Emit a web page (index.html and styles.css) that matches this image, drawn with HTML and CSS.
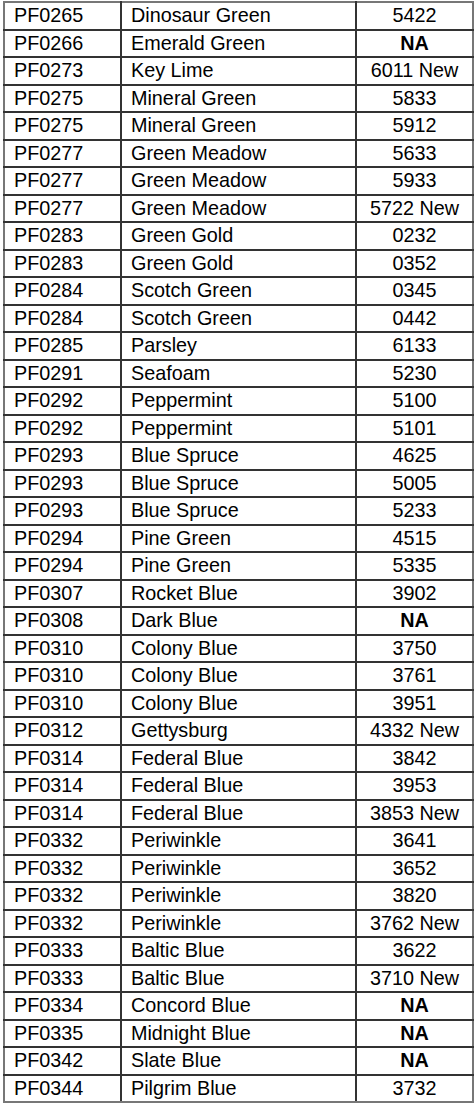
FILE: index.html
```html
<!DOCTYPE html>
<html>
<head>
<meta charset="utf-8">
<link rel="stylesheet" href="styles.css">
</head>
<body>
<table class="paint">
<colgroup><col class="c-code"><col class="c-name"><col class="c-num"></colgroup>
<tbody>
<tr><td>PF0265</td><td>Dinosaur Green</td><td class="num">5422</td></tr>
<tr><td>PF0266</td><td>Emerald Green</td><td class="num na">NA</td></tr>
<tr><td>PF0273</td><td>Key Lime</td><td class="num">6011 New</td></tr>
<tr><td>PF0275</td><td>Mineral Green</td><td class="num">5833</td></tr>
<tr><td>PF0275</td><td>Mineral Green</td><td class="num">5912</td></tr>
<tr><td>PF0277</td><td>Green Meadow</td><td class="num">5633</td></tr>
<tr><td>PF0277</td><td>Green Meadow</td><td class="num">5933</td></tr>
<tr><td>PF0277</td><td>Green Meadow</td><td class="num">5722 New</td></tr>
<tr><td>PF0283</td><td>Green Gold</td><td class="num">0232</td></tr>
<tr><td>PF0283</td><td>Green Gold</td><td class="num">0352</td></tr>
<tr><td>PF0284</td><td>Scotch Green</td><td class="num">0345</td></tr>
<tr><td>PF0284</td><td>Scotch Green</td><td class="num">0442</td></tr>
<tr><td>PF0285</td><td>Parsley</td><td class="num">6133</td></tr>
<tr><td>PF0291</td><td>Seafoam</td><td class="num">5230</td></tr>
<tr><td>PF0292</td><td>Peppermint</td><td class="num">5100</td></tr>
<tr><td>PF0292</td><td>Peppermint</td><td class="num">5101</td></tr>
<tr><td>PF0293</td><td>Blue Spruce</td><td class="num">4625</td></tr>
<tr><td>PF0293</td><td>Blue Spruce</td><td class="num">5005</td></tr>
<tr><td>PF0293</td><td>Blue Spruce</td><td class="num">5233</td></tr>
<tr><td>PF0294</td><td>Pine Green</td><td class="num">4515</td></tr>
<tr><td>PF0294</td><td>Pine Green</td><td class="num">5335</td></tr>
<tr><td>PF0307</td><td>Rocket Blue</td><td class="num">3902</td></tr>
<tr><td>PF0308</td><td>Dark Blue</td><td class="num na">NA</td></tr>
<tr><td>PF0310</td><td>Colony Blue</td><td class="num">3750</td></tr>
<tr><td>PF0310</td><td>Colony Blue</td><td class="num">3761</td></tr>
<tr><td>PF0310</td><td>Colony Blue</td><td class="num">3951</td></tr>
<tr><td>PF0312</td><td>Gettysburg</td><td class="num">4332 New</td></tr>
<tr><td>PF0314</td><td>Federal Blue</td><td class="num">3842</td></tr>
<tr><td>PF0314</td><td>Federal Blue</td><td class="num">3953</td></tr>
<tr><td>PF0314</td><td>Federal Blue</td><td class="num">3853 New</td></tr>
<tr><td>PF0332</td><td>Periwinkle</td><td class="num">3641</td></tr>
<tr><td>PF0332</td><td>Periwinkle</td><td class="num">3652</td></tr>
<tr><td>PF0332</td><td>Periwinkle</td><td class="num">3820</td></tr>
<tr><td>PF0332</td><td>Periwinkle</td><td class="num">3762 New</td></tr>
<tr><td>PF0333</td><td>Baltic Blue</td><td class="num">3622</td></tr>
<tr><td>PF0333</td><td>Baltic Blue</td><td class="num">3710 New</td></tr>
<tr><td>PF0334</td><td>Concord Blue</td><td class="num na">NA</td></tr>
<tr><td>PF0335</td><td>Midnight Blue</td><td class="num na">NA</td></tr>
<tr><td>PF0342</td><td>Slate Blue</td><td class="num na">NA</td></tr>
<tr><td>PF0344</td><td>Pilgrim Blue</td><td class="num">3732</td></tr>
</tbody>
</table>
</body>
</html>
```
FILE: styles.css
```css
html, body {
  margin: 0;
  padding: 0;
  background: #ffffff;
}
body {
  padding: 1px 0 0 3px;
  font-family: "Liberation Sans", Arial, sans-serif;
  color: #000;
}
.paint {
  border-collapse: collapse;
  table-layout: fixed;
  width: 469px;
  border: 2px solid #777;
}
.c-code { width: 117px; }
.c-name { width: 235px; }
.c-num { width: 117px; }
.paint td {
  height: 27.5px;
  padding: 0 0 1px 9px;
  border: 2px solid #333;
  font-size: 19.8px;
  line-height: 22px;
  vertical-align: middle;
  white-space: nowrap;
  box-sizing: border-box;
}
.paint tr:first-child td { border-top-color: #777; }
.paint tr:last-child td { border-bottom-color: #777; }
.paint td:first-child { border-left-color: #777; }
.paint td:last-child { border-right-color: #777; }
.paint td.num {
  text-align: center;
  padding: 0 0 1px 0;
}
.paint td.na {
  font-weight: bold;
}
```
